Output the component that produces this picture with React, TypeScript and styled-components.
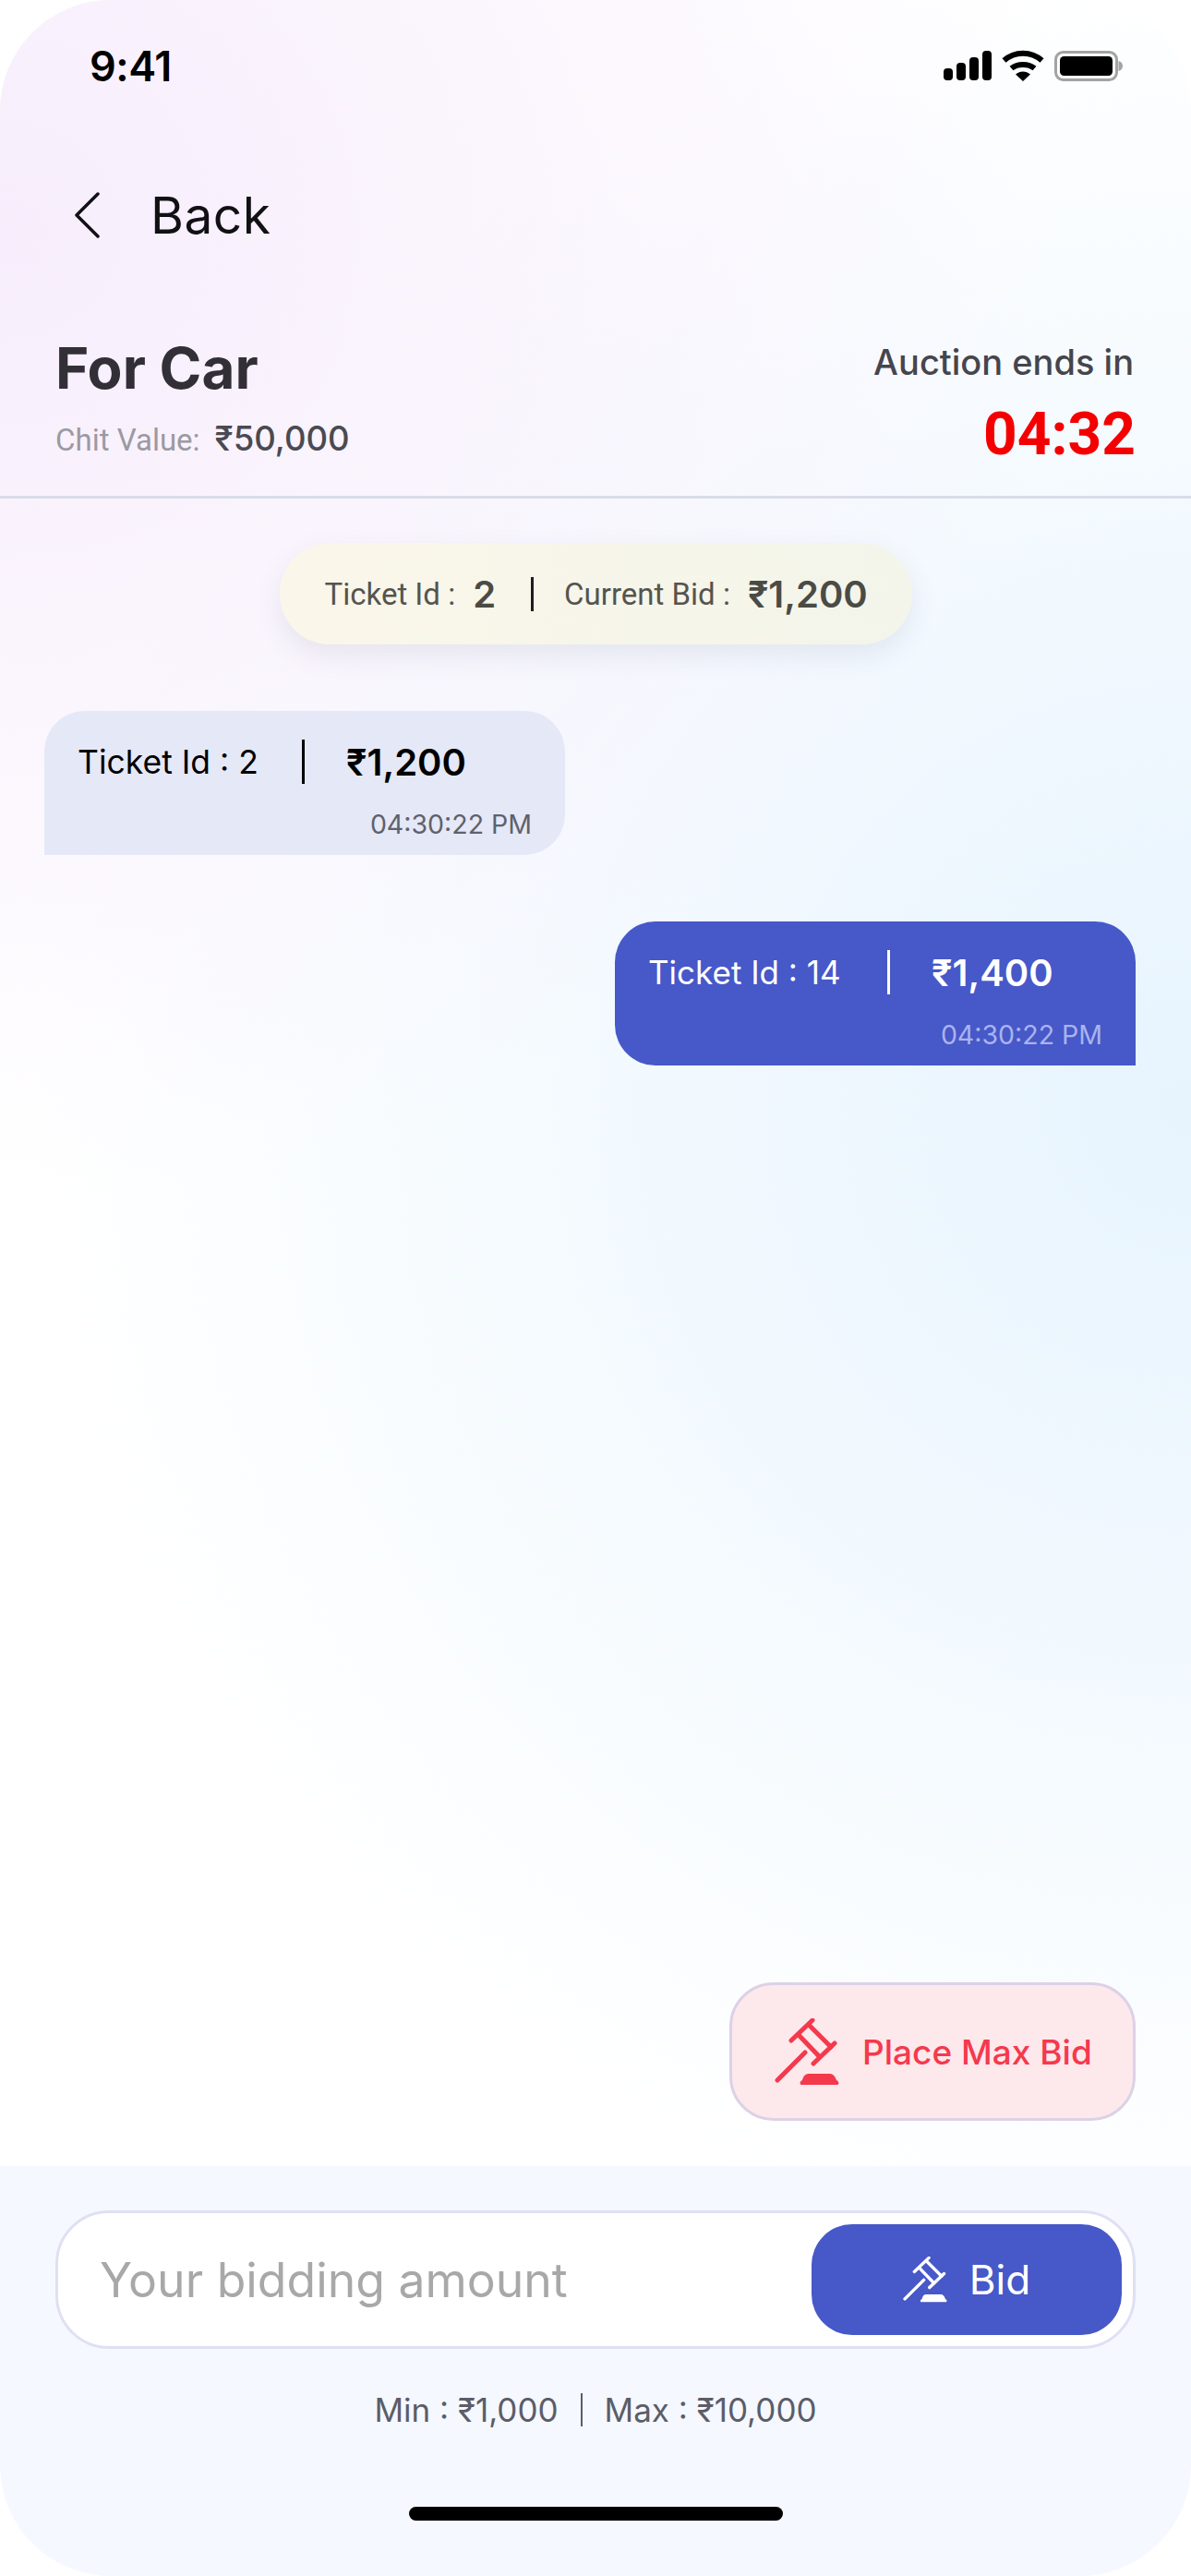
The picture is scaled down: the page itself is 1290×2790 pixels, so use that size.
import React from 'react'
import styled, { createGlobalStyle } from 'styled-components'

const GlobalStyle = createGlobalStyle`
  html, body {
    margin: 0;
    padding: 0;
    background: #ffffff;
  }
  * {
    box-sizing: border-box;
  }
`

const SANS = `Inter, "Noto Sans", sans-serif`
const ROBOTO = `Roboto, "Noto Sans", sans-serif`

const Screen = styled.div`
  width: 1290px;
  height: 2790px;
  display: flex;
  flex-direction: column;
  overflow: hidden;
  border-radius: 120px;
  font-family: ${SANS};
  background:
    radial-gradient(ellipse 1150px 1050px at 0px 250px, #f7edfc 0%, rgba(247, 237, 252, 0) 100%),
    radial-gradient(ellipse 1250px 1250px at 1290px 1200px, #e7f4fe 0%, rgba(231, 244, 254, 0) 100%),
    #ffffff;
`

const StatusBar = styled.div`
  height: 142px;
  flex: none;
  display: flex;
  align-items: center;
  justify-content: space-between;
  padding: 0 74px 0 97px;
`

const Clock = styled.span`
  font-size: 45px;
  font-weight: 600;
  color: #000000;
  letter-spacing: -0.5px;
`

const StatusIcons = styled.div`
  display: flex;
  align-items: center;
  gap: 11px;
`

const BackRow = styled.div`
  margin-top: 41px;
  height: 100px;
  flex: none;
  display: flex;
  align-items: center;
  gap: 55px;
  padding-left: 80px;
`

const BackLabel = styled.span`
  font-size: 55px;
  font-weight: 400;
  color: #111114;
  letter-spacing: 0.5px;
`

const Header = styled.div`
  margin-top: 87px;
  height: 170px;
  flex: none;
  display: flex;
  justify-content: space-between;
  padding: 0 60px;
  border-bottom: 3px solid #d9dce8;
`

const TitleBlock = styled.div`
  display: flex;
  flex-direction: column;
`

const Title = styled.h1`
  margin: 0;
  font-size: 62px;
  line-height: 58px;
  font-weight: 700;
  color: #322f37;
`

const ChitRow = styled.div`
  margin-top: 25px;
  display: flex;
  align-items: baseline;
  gap: 16px;
`

const ChitLabel = styled.span`
  font-family: ${ROBOTO};
  font-size: 33px;
  color: #9b9aa2;
`

const ChitValue = styled.span`
  font-size: 36.5px;
  font-weight: 500;
  color: #4a4a52;
`

const TimerBlock = styled.div`
  display: flex;
  flex-direction: column;
  align-items: flex-end;
`

const TimerLabel = styled.span`
  font-size: 38px;
  line-height: 44px;
  font-weight: 500;
  color: #45454d;
  margin-right: 2px;
`

const TimerValue = styled.span`
  margin-top: 23px;
  font-family: ${ROBOTO};
  font-size: 64px;
  line-height: 68px;
  font-weight: 700;
  color: #f50000;
`

const PillRow = styled.div`
  margin-top: 48px;
  flex: none;
  display: flex;
  justify-content: center;
`

const Pill = styled.div`
  width: 685px;
  height: 110px;
  flex: none;
  display: flex;
  align-items: center;
  padding: 0 0 0 49px;
  border-radius: 55px;
  background: linear-gradient(90deg, #fbf6ea 0%, #f3f5ea 100%);
  box-shadow: 0 12px 30px rgba(70, 80, 110, 0.1);
`

const PillLabel = styled.span`
  font-family: ${ROBOTO};
  font-size: 33px;
  color: #55544e;
  white-space: nowrap;
`

const PillValue = styled.span`
  margin-left: 19px;
  font-size: 40px;
  font-weight: 600;
  color: #4b4b45;
  white-space: nowrap;
`

const PillDivider = styled.i`
  flex: none;
  width: 3px;
  height: 37px;
  margin: 0 33px 0 38px;
  background: #1d1d1d;
`

const BubbleRow = styled.div<{ $mine?: boolean }>`
  margin-top: 72px;
  flex: none;
  display: flex;
  justify-content: ${(p) => (p.$mine ? 'flex-end' : 'flex-start')};
  padding: 0 60px 0 48px;
`

const Bubble = styled.div<{ $mine?: boolean }>`
  width: 564px;
  height: 156px;
  display: flex;
  flex-direction: column;
  padding: 30px 36px 0 36px;
  border-radius: ${(p) => (p.$mine ? '44px 44px 0 44px' : '44px 44px 44px 0')};
  background: ${(p) => (p.$mine ? '#4758c8' : '#e5e8f7')};
  color: ${(p) => (p.$mine ? '#ffffff' : '#000000')};
`

const BubbleMain = styled.div`
  display: flex;
  align-items: center;
  height: 50px;
`

const BubbleTicket = styled.span<{ $mine?: boolean }>`
  width: ${(p) => (p.$mine ? '259px' : '243px')};
  font-size: ${(p) => (p.$mine ? '35px' : '35.5px')};
  white-space: nowrap;
`

const BubbleDivider = styled.i<{ $mine?: boolean }>`
  flex: none;
  width: 3px;
  height: 48px;
  margin-right: 45px;
  background: ${(p) => (p.$mine ? '#ffffff' : '#000000')};
`

const BubbleAmount = styled.span`
  font-size: 40px;
  font-weight: 600;
`

const BubbleTime = styled.span<{ $mine?: boolean }>`
  margin-top: 25px;
  align-self: flex-end;
  font-size: 28.5px;
  color: ${(p) => (p.$mine ? '#aab3ee' : '#5f616c')};
`

const Spacer = styled.div`
  flex: 1;
`

const MaxBidRow = styled.div`
  flex: none;
  display: flex;
  justify-content: flex-end;
  padding: 0 60px 49px 0;
`

const MaxBidButton = styled.button`
  width: 440px;
  height: 150px;
  display: flex;
  align-items: center;
  gap: 22px;
  padding: 0 0 0 46px;
  border: 3px solid #dcd1e6;
  border-radius: 48px;
  background: #fde8ec;
  color: #f5394c;
  font-family: ${SANS};
  font-size: 37px;
  font-weight: 500;
  white-space: nowrap;
`

const BottomPanel = styled.div`
  flex: none;
  height: 444px;
  display: flex;
  flex-direction: column;
  align-items: center;
  padding: 48px 60px 0;
  background: #f5f8ff;
`

const InputBox = styled.div`
  width: 100%;
  height: 150px;
  flex: none;
  display: flex;
  align-items: center;
  justify-content: space-between;
  padding: 0 12px 0 45px;
  border: 3px solid #dfe0f2;
  border-radius: 58px;
  background: #ffffff;
`

const Placeholder = styled.span`
  font-size: 51.7px;
  color: #a8a8a8;
`

const BidButton = styled.button`
  width: 336px;
  height: 120px;
  display: flex;
  align-items: center;
  justify-content: center;
  gap: 22px;
  border: none;
  border-radius: 44px;
  background: #4758c8;
  color: #ffffff;
  font-family: ${SANS};
  font-size: 44px;
`

const Limits = styled.div`
  margin-top: 41px;
  height: 50px;
  flex: none;
  display: flex;
  align-items: center;
  font-size: 35px;
  color: #5b5d68;
`

const LimitDivider = styled.i`
  flex: none;
  width: 2px;
  height: 36px;
  margin: 0 24px;
  background: #5b5d68;
`

const HomeBar = styled.div`
  margin-top: 80px;
  width: 405px;
  height: 15px;
  flex: none;
  border-radius: 8px;
  background: #000000;
`

const SignalIcon = () => (
  <svg width="52" height="32" viewBox="0 0 52 32" fill="#000">
    <rect x="0" y="19" width="10" height="13" rx="4" />
    <rect x="14" y="13" width="10" height="19" rx="4" />
    <rect x="28" y="7" width="10" height="25" rx="4" />
    <rect x="42" y="0" width="10" height="32" rx="4" />
  </svg>
)

const WifiIcon = () => (
  <svg width="46" height="34" viewBox="0 0 46 34" fill="none">
    <path d="M2.5 11.5C14 1 32 1 43.500 11.500" stroke="#000" strokeWidth="6" />
    <path d="M10.500 20C17 14.500 29 14.500 35.500 20" stroke="#000" strokeWidth="6" />
    <path d="M15 26.500C20 22.500 26 22.500 31 26.500L23 34Z" fill="#000" />
  </svg>
)

const BatteryIcon = () => (
  <svg width="74" height="33" viewBox="0 0 74 33">
    <rect x="1.500" y="1.500" width="66" height="30" rx="8" fill="none" stroke="#a3a3a3" strokeWidth="3" />
    <rect x="6" y="6" width="57" height="21" rx="4.500" fill="#000" />
    <path d="M69.500 11C72 11.500 74 13.500 74 16.500S72 21.500 69.500 22Z" fill="#a3a3a3" />
  </svg>
)

const BackIcon = () => (
  <svg width="28" height="50" viewBox="0 0 28 50" fill="none">
    <path
      d="M26 2L3 25L26 48"
      stroke="#111114"
      strokeWidth="3.500"
      strokeLinecap="round"
      strokeLinejoin="round"
    />
  </svg>
)

const GavelIcon = ({ size }: { size: number }) => (
  <svg
    width={size}
    height={size}
    viewBox="0 0 73 73"
    fill="none"
    stroke="currentColor"
    strokeWidth={5}
    strokeLinecap="round"
  >
    <path d="M18 24L41 2M42 49L65 27" />
    <path d="M26 18L49 42M38 8L61 31" />
    <path d="M3 67L33 37" />
    <path
      d="M29 72C27 72 27 68 30 67C31 63 33 60 37 60H60C64 60 66 64 67 67C70 68 70 72 68 72Z"
      fill="currentColor"
      stroke="none"
    />
  </svg>
)

const App = () => {
  return (
    <>
      <GlobalStyle />
      <Screen>
        <StatusBar>
          <Clock>9:41</Clock>
          <StatusIcons>
            <SignalIcon />
            <WifiIcon />
            <BatteryIcon />
          </StatusIcons>
        </StatusBar>

        <BackRow>
          <BackIcon />
          <BackLabel>Back</BackLabel>
        </BackRow>

        <Header>
          <TitleBlock>
            <Title>For Car</Title>
            <ChitRow>
              <ChitLabel>Chit Value:</ChitLabel>
              <ChitValue>₹50,000</ChitValue>
            </ChitRow>
          </TitleBlock>
          <TimerBlock>
            <TimerLabel>Auction ends in</TimerLabel>
            <TimerValue>04:32</TimerValue>
          </TimerBlock>
        </Header>

        <PillRow>
          <Pill>
            <PillLabel>Ticket Id :</PillLabel>
            <PillValue>2</PillValue>
            <PillDivider />
            <PillLabel>Current Bid :</PillLabel>
            <PillValue>₹1,200</PillValue>
          </Pill>
        </PillRow>

        <BubbleRow>
          <Bubble>
            <BubbleMain>
              <BubbleTicket>Ticket Id : 2</BubbleTicket>
              <BubbleDivider />
              <BubbleAmount>₹1,200</BubbleAmount>
            </BubbleMain>
            <BubbleTime>04:30:22 PM</BubbleTime>
          </Bubble>
        </BubbleRow>

        <BubbleRow $mine>
          <Bubble $mine>
            <BubbleMain>
              <BubbleTicket $mine>Ticket Id : 14</BubbleTicket>
              <BubbleDivider $mine />
              <BubbleAmount>₹1,400</BubbleAmount>
            </BubbleMain>
            <BubbleTime $mine>04:30:22 PM</BubbleTime>
          </Bubble>
        </BubbleRow>

        <Spacer />

        <MaxBidRow>
          <MaxBidButton>
            <GavelIcon size={73} />
            Place Max Bid
          </MaxBidButton>
        </MaxBidRow>

        <BottomPanel>
          <InputBox>
            <Placeholder>Your bidding amount</Placeholder>
            <BidButton>
              <GavelIcon size={50} />
              Bid
            </BidButton>
          </InputBox>
          <Limits>
            Min : ₹1,000
            <LimitDivider />
            Max : ₹10,000
          </Limits>
          <HomeBar />
        </BottomPanel>
      </Screen>
    </>
  )
}

export default App
